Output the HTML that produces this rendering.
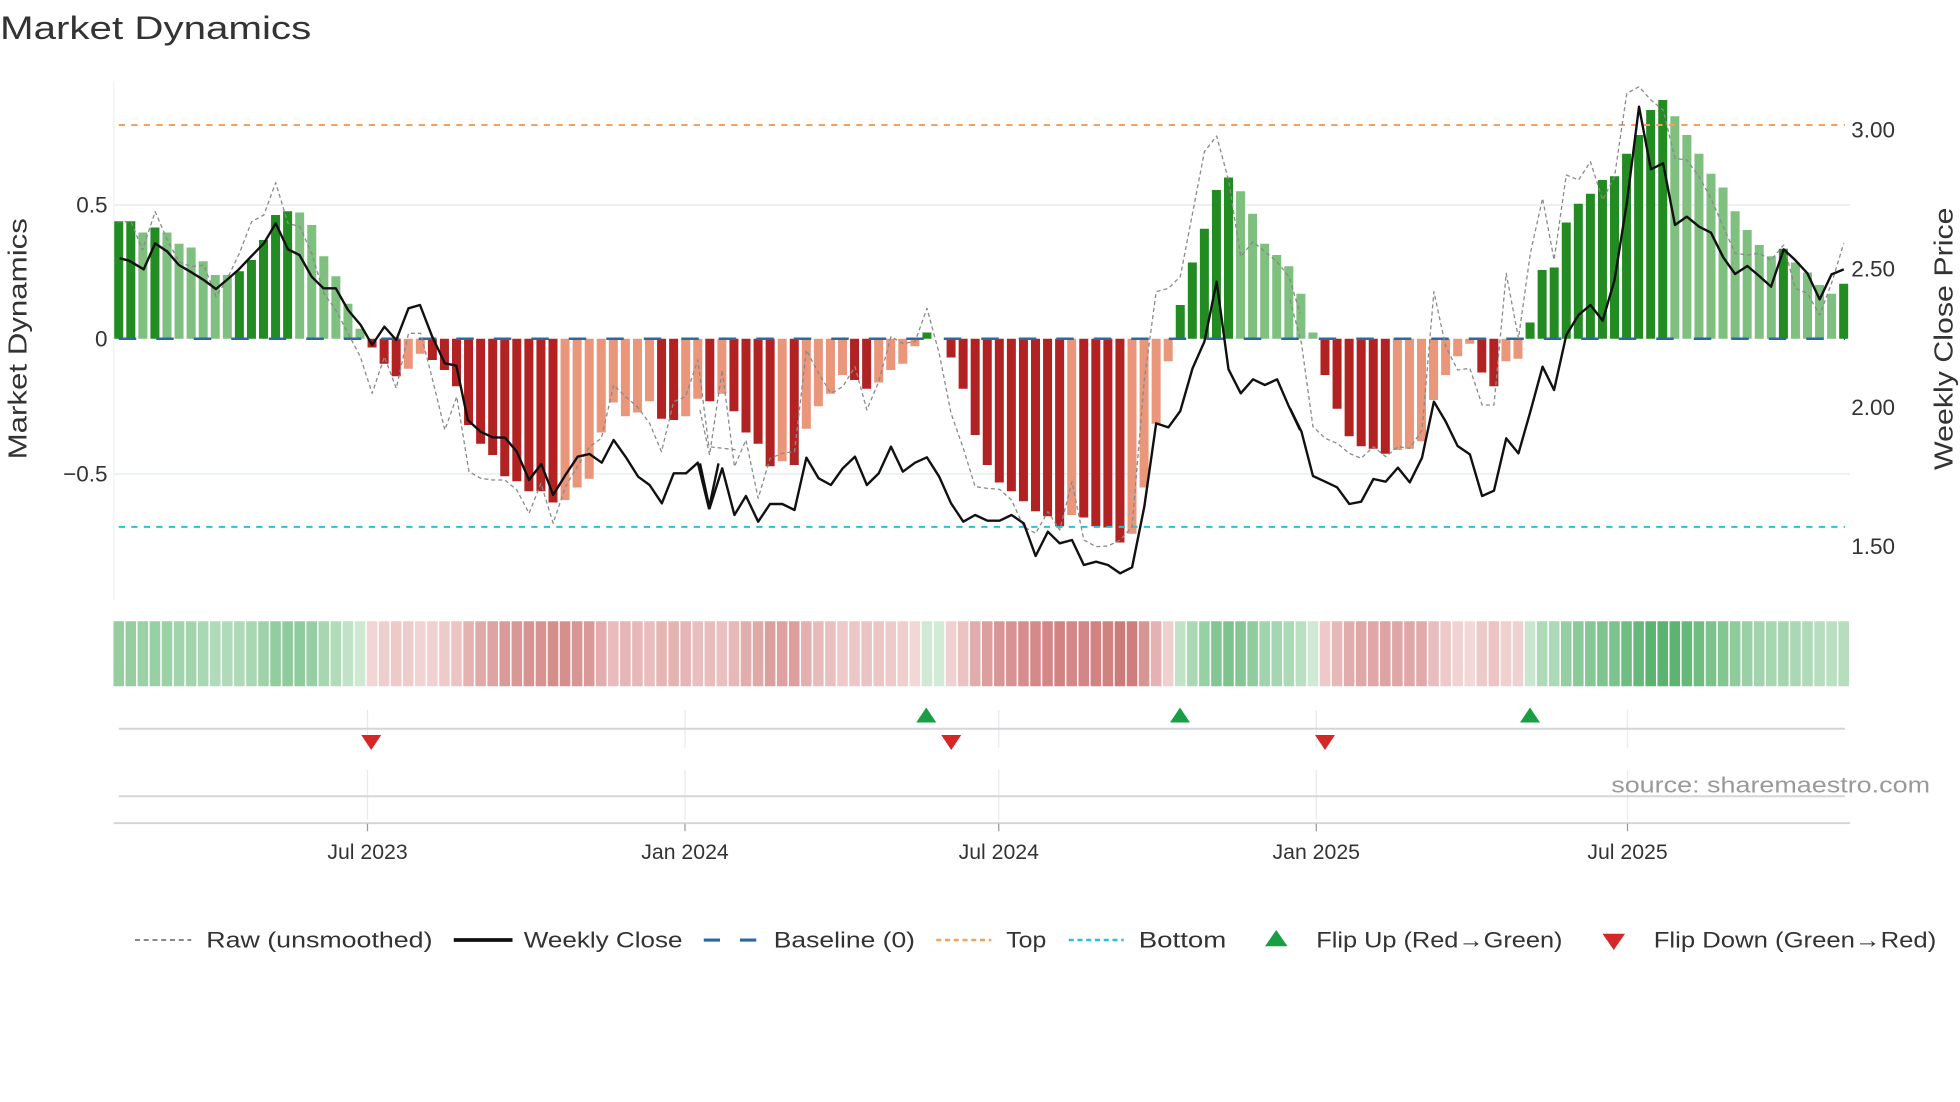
<!DOCTYPE html>
<html><head><meta charset="utf-8"><style>
html,body{margin:0;padding:0;background:#fff;}
svg{display:block;font-family:"Liberation Sans","DejaVu Sans",sans-serif;}
</style></head><body>
<svg id="s" width="1960" height="1102" viewBox="0 0 1568 881.6" xmlns="http://www.w3.org/2000/svg">
<rect width="1568" height="882" fill="#fff"/>
<text x="0" y="31" font-size="26" fill="#333" textLength="249" lengthAdjust="spacingAndGlyphs">Market Dynamics</text>
<!-- grid -->
<line x1="91" y1="65" x2="91" y2="480" stroke="#eef0f3" stroke-width="1"/>
<line x1="91" y1="164" x2="1480" y2="164" stroke="#eceff3" stroke-width="1.5"/>
<line x1="91" y1="379" x2="1480" y2="379" stroke="#eceff3" stroke-width="1.5"/>
<g id="bars"></g>
<line x1="95" y1="100" x2="1476" y2="100" stroke="#f2a15e" stroke-width="1.6" stroke-dasharray="5,5"/>
<line x1="95" y1="421.5" x2="1476" y2="421.5" stroke="#25c3d9" stroke-width="1.6" stroke-dasharray="5,5"/>
<line x1="95" y1="271" x2="1476" y2="271" stroke="#2a6aa2" stroke-width="2" stroke-dasharray="14,16"/>
<g id="lines" fill="none"></g>
<!-- axes labels -->
<g font-size="18" fill="#333">
<text x="86" y="170" text-anchor="end">0.5</text>
<text x="86" y="277" text-anchor="end">0</text>
<text x="86" y="385" text-anchor="end">−0.5</text>
<text x="1481" y="110">3.00</text>
<text x="1481" y="221">2.50</text>
<text x="1481" y="332">2.00</text>
<text x="1481" y="443">1.50</text>
<text transform="translate(21,271) rotate(-90)" text-anchor="middle" font-size="21" textLength="193" lengthAdjust="spacingAndGlyphs">Market Dynamics</text>
<text transform="translate(1562,271) rotate(-90)" text-anchor="middle" font-size="21" textLength="210" lengthAdjust="spacingAndGlyphs">Weekly Close Price</text>
</g>
<g id="strip"></g>
<!-- flips panel -->
<g stroke="#e8eaee" stroke-width="1">
<line x1="294" y1="568" x2="294" y2="598"/><line x1="548" y1="568" x2="548" y2="598"/><line x1="799" y1="568" x2="799" y2="598"/><line x1="1053" y1="568" x2="1053" y2="598"/><line x1="1302" y1="568" x2="1302" y2="598"/>
<line x1="294" y1="616" x2="294" y2="656"/><line x1="548" y1="616" x2="548" y2="656"/><line x1="799" y1="616" x2="799" y2="656"/><line x1="1053" y1="616" x2="1053" y2="656"/><line x1="1302" y1="616" x2="1302" y2="656"/>
</g>
<line x1="95" y1="583" x2="1476" y2="583" stroke="#d4d6d9" stroke-width="1.6"/>
<line x1="95" y1="637" x2="1476" y2="637" stroke="#d4d6d9" stroke-width="1.6"/>
<line x1="91" y1="658.5" x2="1480" y2="658.5" stroke="#d4d6d9" stroke-width="1.6"/>
<g stroke="#999" stroke-width="1"><line x1="294" y1="659" x2="294" y2="665"/><line x1="548" y1="659" x2="548" y2="665"/><line x1="799" y1="659" x2="799" y2="665"/><line x1="1053" y1="659" x2="1053" y2="665"/><line x1="1302" y1="659" x2="1302" y2="665"/></g>
<g fill="#1a9e45"><path d="M741 566 L733 578 L749 578Z"/><path d="M944 566 L936 578 L952 578Z"/><path d="M1224 566 L1216 578 L1232 578Z"/></g>
<g fill="#d62728"><path d="M297 600 L289 588 L305 588Z"/><path d="M761 600 L753 588 L769 588Z"/><path d="M1060 600 L1052 588 L1068 588Z"/></g>
<text x="1544" y="634" font-size="18" fill="#999" text-anchor="end" textLength="255" lengthAdjust="spacingAndGlyphs">source: sharemaestro.com</text>
<g font-size="17" fill="#333" text-anchor="middle">
<text x="294" y="687">Jul 2023</text><text x="548" y="687">Jan 2024</text><text x="799" y="687">Jul 2024</text><text x="1053" y="687">Jan 2025</text><text x="1302" y="687">Jul 2025</text>
</g>
<!-- legend -->
<g font-size="18" fill="#333">
<line x1="108" y1="752" x2="153" y2="752" stroke="#888" stroke-width="1.6" stroke-dasharray="4,3"/>
<text x="165" y="758" textLength="181" lengthAdjust="spacingAndGlyphs">Raw (unsmoothed)</text>
<line x1="363" y1="752" x2="410" y2="752" stroke="#111" stroke-width="3"/>
<text x="419" y="758" textLength="127" lengthAdjust="spacingAndGlyphs">Weekly Close</text>
<line x1="563" y1="752" x2="606" y2="752" stroke="#2a6aa2" stroke-width="2.5" stroke-dasharray="13,16"/>
<text x="619" y="758" textLength="113" lengthAdjust="spacingAndGlyphs">Baseline (0)</text>
<line x1="749" y1="752" x2="793" y2="752" stroke="#f2a15e" stroke-width="2" stroke-dasharray="4,3"/>
<text x="805" y="758" textLength="32" lengthAdjust="spacingAndGlyphs">Top</text>
<line x1="855" y1="752" x2="899" y2="752" stroke="#25c3d9" stroke-width="2" stroke-dasharray="4,3"/>
<text x="911" y="758" textLength="70" lengthAdjust="spacingAndGlyphs">Bottom</text>
<path d="M1021 744 L1012 757 L1030 757Z" fill="#1a9e45"/>
<text x="1053" y="758" textLength="197" lengthAdjust="spacingAndGlyphs">Flip Up (Red→Green)</text>
<path d="M1291 760 L1282 747 L1300 747Z" fill="#d62728"/>
<text x="1323" y="758" textLength="226" lengthAdjust="spacingAndGlyphs">Flip Down (Green→Red)</text>
</g>
</svg>
<script>
var D=[["d",177],["d",177],["l",186],["d",182],["l",186],["l",195],["l",198],["l",209],["l",220],["l",220],["d",217],["d",208],["d",192],["d",172],["d",169],["l",170],["l",180],["l",205],["l",221],["l",243],["l",263],
["d",278],["d",291],["d",301],["l",295],["l",283],["d",288],["d",296],["d",309],["d",340],["d",355],["d",364],["d",381],["d",385],["d",393],["d",393],["d",402],["l",400],["l",390],["l",383],["l",346],["l",322],["l",333],["l",330],["l",321],["d",335],["d",336],["l",333],["l",319],
["d",321],["l",315],["d",329],["d",346],["d",355],["d",373],["l",369],["d",372],["l",343],["l",325],["l",315],["l",300],["d",304],["d",311],["l",306],["l",296],["l",291],["l",277],["d",266],["l",271],["d",286],["d",311],["d",348],["d",372],["d",386],["d",393],["d",401],["d",409],["d",413],["d",421],["l",412],["d",414],["d",421],["d",422],["d",434],["l",427],["l",390],["l",339],["l",289],
["d",244],["d",210],["d",183],["d",152],["d",142],["l",153],["l",171],["l",195],["l",204],["l",213],["l",235],["l",266],
["d",300],["d",327],["d",349],["d",357],["d",359],["d",363],["l",360],["l",359],["l",353],["l",320],["l",300],["l",285],["l",275],["d",298],["d",309],["l",289],["l",287],
["d",258],["d",216],["d",214],["d",178],["d",163],["d",155],["d",144],["d",141],["d",123],["d",108],["d",88],["d",80],["l",93],["l",108],["l",123],["l",139],["l",150],["l",169],["l",184],["l",196],["l",205],["d",199],["l",210],["l",218],["l",228],["l",235],["d",227]];
var NS="http://www.w3.org/2000/svg",bars=document.getElementById("bars"),strip=document.getElementById("strip");
function el(p,t,a){var e=document.createElementNS(NS,t);for(var k in a)e.setAttribute(k,a[k]);p.appendChild(e);return e;}
var sp=9.65,w=7.2;
D.forEach(function(b,i){var cx=95+i*sp,y=b[1],z=271,pos=y<z;
 var c=pos?(b[0]=="d"?"#228b22":"#7fbf7f"):(b[0]=="d"?"#b22222":"#e9967a");
 if(Math.abs(y-z)>0.5)el(bars,"rect",{x:cx-w/2,y:Math.min(y,z),width:w,height:Math.abs(y-z),fill:c});
 var v=(z-y)/214,a=Math.min(1,Math.abs(v)/0.85);
 var col;
 if(v>=0){var r=Math.round(210-(210-60)*a*0.8),g=Math.round(235-(235-165)*a*0.8),bl=Math.round(215-(215-85)*a*0.8);col="rgb("+r+","+g+","+bl+")";}
 else{var r2=Math.round(244-(244-200)*a),g2=Math.round(218-(218-112)*a),b2=Math.round(218-(218-110)*a);col="rgb("+r2+","+g2+","+b2+")";}
 el(strip,"rect",{x:cx-sp/2+0.6,y:497,width:sp-1.2,height:52,fill:col});
});
var L=document.getElementById("lines");
function poly(tx,pts,st,sw,da){var g=el(L,"g",{transform:"translate("+tx+",64) scale(0.30616,0.26667)"});
 var a={points:pts,stroke:st,"stroke-width":sw,fill:"none","vector-effect":"non-scaling-stroke","stroke-linejoin":"round"};if(da)a["stroke-dasharray"]=da;el(g,"polyline",a);}
var r2="20,425 55,425 85,510 118,395 150,480 180,545 212,560 245,555 277,650 305,600 338,520 370,425 402,405 433,308 465,430 496,440 527,520 559,640 590,690 622,760 654,830 685,940 717,830 748,925 780,760 812,760 843,900 875,1050 906,950 938,1175 969,1195 1000,1200 1032,1200 1063,1230 1095,1300 1126,1210 1158,1330 1190,1220 1221,1160 1253,1100 1284,1075 1316,915 1347,950 1378,980 1410,1030 1441,1115 1473,965 1504,950 1536,840 1565,1100 1640,1110";
var r3="0,990 25,1125 58,870 90,1160 120,1080 152,1255 183,1135 215,1120 247,1115 278,810 310,880 342,940 373,920 405,860 436,990 467,905 499,770 530,790 562,785 593,685 625,820 656,1000 688,1105 719,1220 751,1225 783,1228 814,1260 846,1340 877,1360 909,1295 940,1350 972,1205 1003,1380 1035,1400 1066,1398 1098,1380 1129,1340 1161,900 1192,635 1224,625 1255,590 1287,400 1318,215 1350,168 1381,300 1413,530 1445,485 1476,515 1508,545 1539,590 1568,700";
var r4="0,660 30,790 60,1040 92,1075 123,1090 155,1120 186,1135 218,1100 250,1130 282,1100 313,1105 345,1050 376,635 407,800 438,870 470,865 502,975 533,975 565,580 597,775 628,520 660,355 690,540 722,285 754,300 785,245 817,360 848,290 880,40 912,20 943,60 975,90 1006,235 1037,240 1069,290 1100,355 1132,440 1163,520 1195,525 1226,520 1257,540 1290,495 1320,625 1352,640 1384,705 1415,610 1447,490";
var b2="25,535 50,542 88,568 118,490 150,515 180,555 210,575 245,600 277,627 305,600 335,570 370,528 402,490 433,430 465,508 495,525 527,590 558,625 590,625 622,690 655,735 685,795 717,740 748,780 780,685 810,675 842,770 875,850 905,857 935,1020 968,1055 1000,1072 1032,1073 1063,1115 1095,1200 1127,1152 1158,1245 1190,1185 1222,1130 1253,1122 1285,1148 1316,1080 1347,1130 1380,1190 1410,1215 1442,1270 1473,1180 1505,1180 1536,1148 1565,1285 1590,1150";
var b3="0,1150 25,1285 58,1165 90,1305 120,1248 152,1325 183,1272 215,1272 247,1290 278,1133 310,1195 342,1215 373,1165 405,1130 436,1215 467,1180 499,1100 530,1175 562,1148 593,1132 625,1190 656,1270 688,1325 719,1305 751,1322 783,1322 814,1305 846,1330 877,1428 909,1355 940,1390 972,1380 1003,1455 1035,1445 1066,1455 1098,1480 1129,1462 1161,1280 1192,1030 1224,1042 1255,993 1287,865 1318,785 1350,605 1381,868 1413,940 1445,898 1476,915 1508,898 1539,980 1568,1050";
var b4="0,985 30,1055 60,1188 92,1205 123,1222 155,1272 186,1265 218,1197 250,1205 282,1163 313,1207 345,1133 376,965 407,1025 438,1098 470,1123 502,1248 533,1232 565,1075 597,1120 628,995 660,860 690,930 722,765 754,705 785,675 817,722 848,600 880,370 912,80 943,268 975,250 1006,435 1037,410 1069,440 1100,458 1132,532 1163,582 1195,558 1226,588 1257,620 1290,508 1320,540 1352,580 1384,658 1415,583 1447,568";
poly(88,r2,"#8a8a8a",1.3,"4,3");poly(560,r3,"#8a8a8a",1.3,"4,3");poly(1032,r4,"#8a8a8a",1.3,"4,3");
poly(88,b2,"#111",2.4);poly(560,b3,"#111",2.4);poly(1032,b4,"#111",2.4);
</script>
</body></html>
